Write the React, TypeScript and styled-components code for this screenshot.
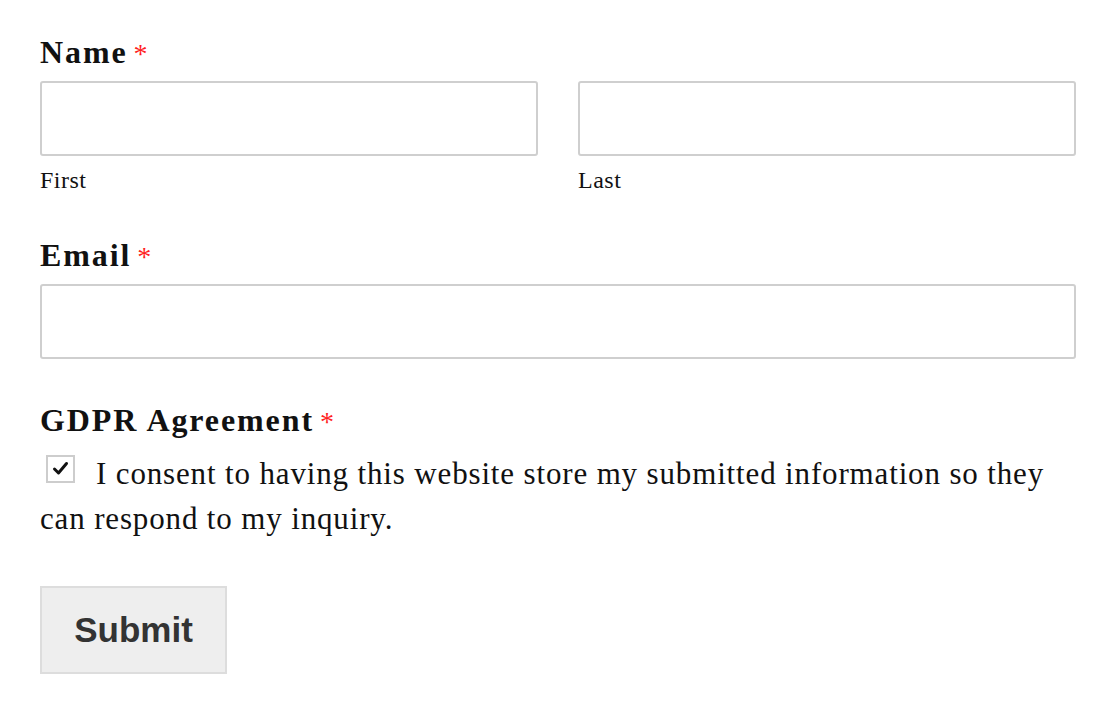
import React from 'react'
import styled, { createGlobalStyle } from 'styled-components'

const GlobalStyle = createGlobalStyle`
  html, body {
    margin: 0;
    padding: 0;
    background: #fff;
  }
  body {
    font-family: 'Liberation Serif', 'Times New Roman', serif;
    color: #111;
  }
`

const Form = styled.form`
  width: 1036px;
  padding: 33px 40px 40px 40px;
  display: flex;
  flex-direction: column;
`

const Field = styled.div<{ gap?: number }>`
  margin-bottom: ${(p) => p.gap ?? 36}px;
`

const Label = styled.div`
  font-size: 32px;
  font-weight: 700;
  line-height: 38px;
  margin-bottom: 8px;
  letter-spacing: 1.9px;
`

const Required = styled.span`
  color: #ff1f1f;
  font-weight: 400;
  font-size: 28px;
  margin-left: 6px;
  letter-spacing: 0;
`

const Row = styled.div`
  display: grid;
  grid-template-columns: 1fr 1fr;
  gap: 40px;
`

const Input = styled.input`
  display: block;
  box-sizing: border-box;
  width: 100%;
  height: 75px;
  border: 2px solid #cfcfcf;
  border-radius: 3px;
  background: #fff;
  font-size: 24px;
  outline: none;
`

const Sub = styled.div`
  font-size: 24px;
  line-height: 28px;
  margin-top: 10px;
  letter-spacing: 0.5px;
  color: #111;
`

const Consent = styled.label`
  display: block;
  font-size: 31px;
  line-height: 45px;
  letter-spacing: 0.85px;
  padding-top: 2px;
`

const Box = styled.span`
  display: inline-flex;
  align-items: center;
  justify-content: center;
  box-sizing: border-box;
  width: 29px;
  height: 28px;
  margin: 0 21px 0 6px;
  border: 2px solid #cdcdcd;
  background: #fff;
  vertical-align: 8px;
`

const SubmitButton = styled.button`
  align-self: flex-start;
  box-sizing: border-box;
  width: 187px;
  height: 88px;
  background: #eeeeee;
  border: 2px solid #dddddd;
  border-radius: 0;
  font-family: 'Liberation Sans', Arial, sans-serif;
  font-size: 35px;
  font-weight: 700;
  color: #333;
  cursor: pointer;
`

export default function App() {
  return (
    <>
      <GlobalStyle />
      <Form onSubmit={(e) => e.preventDefault()}>
        <Field gap={42}>
          <Label>
            Name<Required>*</Required>
          </Label>
          <Row>
            <div>
              <Input type="text" />
              <Sub>First</Sub>
            </div>
            <div>
              <Input type="text" />
              <Sub>Last</Sub>
            </div>
          </Row>
        </Field>

        <Field gap={42}>
          <Label>
            Email<Required>*</Required>
          </Label>
          <Input type="email" />
        </Field>

        <Field gap={45}>
          <Label>
            GDPR Agreement<Required>*</Required>
          </Label>
          <Consent>
            <Box>
              <svg width="17" height="15" viewBox="0 0 17 15">
                <path d="M2.5 8 L6.5 12 L14.5 2.5" fill="none" stroke="#111" strokeWidth="3" strokeLinecap="round" strokeLinejoin="round" />
              </svg>
            </Box>
            I consent to having this website store my submitted information so they can respond to my inquiry.
          </Consent>
        </Field>

        <SubmitButton type="submit">Submit</SubmitButton>
      </Form>
    </>
  )
}
